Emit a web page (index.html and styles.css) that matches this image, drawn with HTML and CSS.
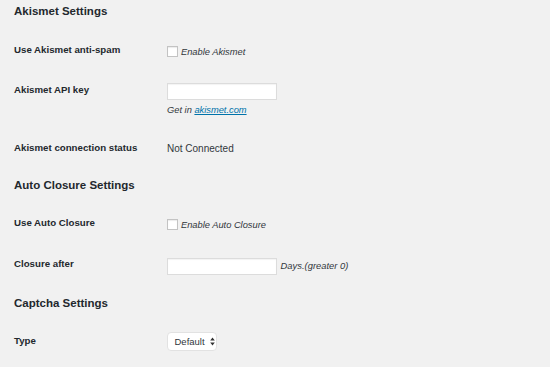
FILE: index.html
```html
<!DOCTYPE html>
<html>
<head>
<meta charset="utf-8">
<link rel="stylesheet" href="styles.css">
</head>
<body>
<div class="page">
  <h2 class="h-first">Akismet Settings</h2>
  <div class="row r1">
    <div class="th">Use Akismet anti-spam</div>
    <div class="td td-check"><span class="cb"></span><em>Enable Akismet</em></div>
  </div>
  <div class="row r2">
    <div class="th th-input">Akismet API key</div>
    <div class="td">
      <div class="text-input"></div>
      <p class="desc">Get in <a href="#">akismet.com</a></p>
    </div>
  </div>
  <div class="row r3">
    <div class="th">Akismet connection status</div>
    <div class="td status">Not Connected</div>
  </div>

  <h2 class="h2">Auto Closure Settings</h2>
  <div class="row r4">
    <div class="th">Use Auto Closure</div>
    <div class="td td-check"><span class="cb"></span><em>Enable Auto Closure</em></div>
  </div>
  <div class="row r5">
    <div class="th th-input">Closure after</div>
    <div class="td td-inline">
      <div class="text-input"></div>
      <em class="suffix">Days.(greater 0)</em>
    </div>
  </div>

  <h2 class="h3">Captcha Settings</h2>
  <div class="row r6">
    <div class="th th-select">Type</div>
    <div class="td">
      <div class="select"><span>Default</span>
        <svg width="5" height="9" viewBox="0 0 5 9"><path d="M2.5 0.5 L4.8 3.6 L0.2 3.6 Z M2.5 8.5 L4.8 5.4 L0.2 5.4 Z" fill="#333"/></svg>
      </div>
    </div>
  </div>
</div>
</body>
</html>
```
FILE: styles.css
```css
html, body {
  margin: 0;
  background: #f1f1f1;
}
body {
  color: #23282d;
  font-family: "Liberation Sans", Arial, sans-serif;
}
.page {
  padding: 4px 0 0 14px;
}
h2 {
  margin: 0;
  font-size: 11.5px;
  line-height: 14px;
  font-weight: bold;
}
.h2 { margin-top: 23.2px; }
.h3 { margin-top: 21.5px; }

.row {
  display: flex;
  align-items: flex-start;
}
.r1 { margin-top: 25.6px; }
.r2 { margin-top: 26.4px; }
.r3 { margin-top: 26.2px; }
.r4 { margin-top: 25px; }
.r5 { margin-top: 28px; }
.r6 { margin-top: 21.9px; }

.th {
  flex: none;
  width: 153px;
  font-weight: bold;
  font-size: 9.7px;
  line-height: 12px;
}
.th-input { padding-top: 0.6px; }
.th-select { padding-top: 2.9px; }

.td {
  font-size: 9.3px;
  line-height: 12px;
}
.td-check {
  display: flex;
  align-items: flex-start;
  padding-top: 2px;
  height: 11px;
}
.cb {
  flex: none;
  width: 9px;
  height: 9px;
  background: #fff;
  border: 1px solid #c3c3c3;
  box-shadow: inset 0 1px 1px rgba(0,0,0,0.08);
}
.td-check em {
  margin-left: 3px;
  font-size: 9.3px;
  line-height: 13px;
  color: #32373c;
}
.text-input {
  width: 108px;
  height: 15px;
  background: #fff;
  border: 1px solid #dcdcdc;
  box-shadow: inset 0 1px 1px rgba(0,0,0,0.05);
}
.desc {
  margin: 3.9px 0 0;
  font-style: italic;
  color: #32373c;
}
.desc a {
  color: #0073aa;
  text-decoration: underline;
}
.status {
  font-size: 10px;
  padding-top: 0.6px;
  color: #32373c;
}
.td-inline {
  display: flex;
  align-items: center;
}
.suffix {
  margin-left: 3.6px;
  font-size: 9.4px;
  color: #32373c;
}
.select {
  box-sizing: border-box;
  width: 50px;
  height: 19px;
  display: flex;
  align-items: center;
  padding-left: 6.5px;
  background: #fff;
  border: 1px solid #e2e2e2;
  border-radius: 4px;
  font-size: 9.5px;
  color: #32373c;
}
.select svg {
  margin-left: 5px;
}
```
